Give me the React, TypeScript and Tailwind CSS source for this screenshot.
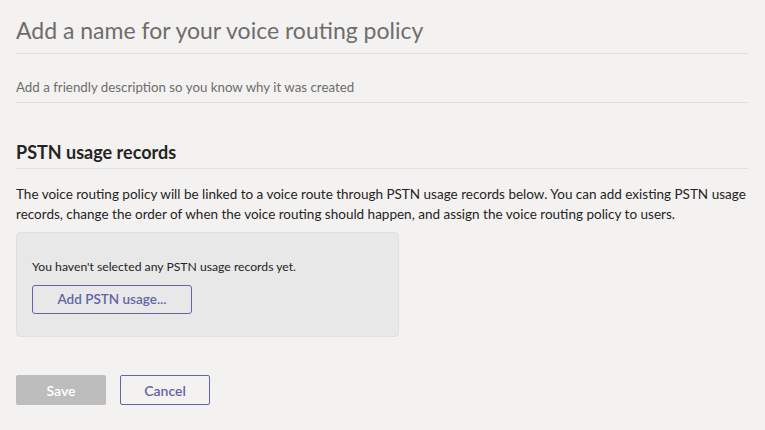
export default function App() {
  return (
    <main
      className="min-h-[430px] w-[765px] bg-[#f3f2f1] pl-4 pr-[17px] text-[#252423]"
      style={{ fontFamily: '"Segoe UI", Lato, "Open Sans", sans-serif' }}
    >
      <div className="border-b border-[#e1dfdd] pt-[14px] pb-[7px]">
        <h1 className="text-[23px] leading-[32px] font-normal text-[#6e6d6c]">
          Add a name for your voice routing policy
        </h1>
      </div>
      <div className="border-b border-[#e1dfdd] pt-[24px] pb-[6px]">
        <p className="text-[13.3px] leading-[18px] text-[#6e6d6c]">
          Add a friendly description so you know why it was created
        </p>
      </div>

      <section className="mt-[37px]">
        <h2 className="border-b border-[#e1dfdd] pb-[4px] text-[18px] leading-[24px] font-bold text-[#252423]">
          PSTN usage records
        </h2>
        <p className="mt-[15px] text-[13.5px] leading-[20px]">
          The voice routing policy will be linked to a voice route through PSTN usage records below. You can add existing
          PSTN usage records, change the order of when the voice routing should happen, and assign the voice routing policy
          to users.
        </p>

        <div className="mt-[8px] h-[105px] w-[383px] rounded border border-[#e1dfdd] bg-[#e8e8e8] pl-[15px] pt-[25px]">
          <p className="text-[12.2px] leading-[18px]">You haven't selected any PSTN usage records yet.</p>
          <button className="mt-[9px] h-[29px] w-[160px] rounded-[3px] border border-[#6264a7] text-[13.5px] font-semibold text-[#6264a7]">
            Add PSTN usage...
          </button>
        </div>
      </section>

      <div className="mt-[38px] flex gap-[14px]">
        <button className="h-[30px] w-[90px] rounded-[2px] bg-[#bdbdbd] text-[14px] font-semibold text-white">
          Save
        </button>
        <button className="h-[30px] w-[90px] rounded-[2px] border border-[#6264a7] text-[14px] font-semibold text-[#6264a7]">
          Cancel
        </button>
      </div>
    </main>
  )
}
